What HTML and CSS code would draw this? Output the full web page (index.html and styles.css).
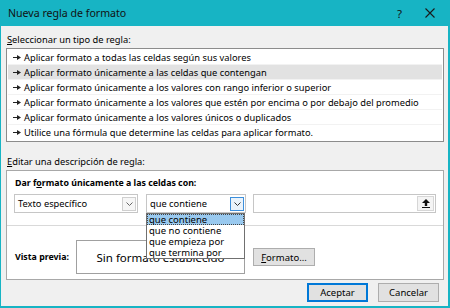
FILE: index.html
```html
<!DOCTYPE html>
<html lang="es">
<head>
<meta charset="utf-8"/>
<title>Nueva regla de formato</title>
<link rel="stylesheet" href="styles.css">
</head>
<body>
<div class="dialog">
  <div class="titlebar">
    <span class="title">Nueva regla de formato</span>
    <span class="help">?</span>
    <svg class="close" width="10" height="10" viewBox="0 0 10 10"><path d="M0.5 0.5 L9.5 9.5 M9.5 0.5 L0.5 9.5" stroke="#1a1a1a" stroke-width="1.1" fill="none"/></svg>
  </div>
  <div class="content">
    <div class="label"><u>S</u>eleccionar un tipo de regla:</div>
    <ul class="rule-types">
      <li><svg class="pointer" width="8" height="5" viewBox="0 0 8 5"><path d="M0 2 H4 V3 H0 Z M4 0 L8 2.5 L4 5 Z" fill="#222"/></svg>Aplicar formato a todas las celdas según sus valores</li>
      <li class="selected"><svg class="pointer" width="8" height="5" viewBox="0 0 8 5"><path d="M0 2 H4 V3 H0 Z M4 0 L8 2.5 L4 5 Z" fill="#222"/></svg>Aplicar formato únicamente a las celdas que contengan</li>
      <li><svg class="pointer" width="8" height="5" viewBox="0 0 8 5"><path d="M0 2 H4 V3 H0 Z M4 0 L8 2.5 L4 5 Z" fill="#222"/></svg>Aplicar formato únicamente a los valores con rango inferior o superior</li>
      <li><svg class="pointer" width="8" height="5" viewBox="0 0 8 5"><path d="M0 2 H4 V3 H0 Z M4 0 L8 2.5 L4 5 Z" fill="#222"/></svg>Aplicar formato únicamente a los valores que estén por encima o por debajo del promedio</li>
      <li><svg class="pointer" width="8" height="5" viewBox="0 0 8 5"><path d="M0 2 H4 V3 H0 Z M4 0 L8 2.5 L4 5 Z" fill="#222"/></svg>Aplicar formato únicamente a los valores únicos o duplicados</li>
      <li><svg class="pointer" width="8" height="5" viewBox="0 0 8 5"><path d="M0 2 H4 V3 H0 Z M4 0 L8 2.5 L4 5 Z" fill="#222"/></svg>Utilice una fórmula que determine las celdas para aplicar formato.</li>
    </ul>
    <div class="label label-edit"><u>E</u>ditar una descripción de regla:</div>
    <div class="group">
      <div class="group-top">
        <div class="bold">Dar f<u>o</u>rmato únicamente a las celdas con:</div>
        <div class="controls">
          <div class="combo combo-type">
            <span class="combo-text">Texto específico</span>
            <span class="combo-btn"><svg width="7" height="4" viewBox="0 0 7 4"><path d="M0.5 0.5 L3.5 3.5 L6.5 0.5" stroke="#666" fill="none"/></svg></span>
          </div>
          <div class="combo combo-op">
            <span class="combo-text">que contiene</span>
            <span class="combo-btn focused"><svg width="7" height="4" viewBox="0 0 7 4"><path d="M0.5 0.5 L3.5 3.5 L6.5 0.5" stroke="#333" fill="none"/></svg></span>
            <ul class="dropdown">
              <li class="active">que contiene</li>
              <li>que no contiene</li>
              <li>que empieza por</li>
              <li>que termina por</li>
            </ul>
          </div>
          <div class="textfield">
            <span class="ref-btn"><svg width="8" height="9" viewBox="0 0 8 9"><path d="M4 0 L8 4 H5.2 V7 H2.8 V4 H0 Z M0 8 H8 V9 H0 Z" fill="#111"/></svg></span>
          </div>
        </div>
      </div>
      <div class="group-bottom">
        <span class="bold preview-label">Vista previa:</span>
        <div class="preview">Sin formato establecido</div>
        <button class="btn btn-format"><u>F</u>ormato...</button>
      </div>
    </div>
    <div class="actions">
      <button class="btn btn-default">Aceptar</button>
      <button class="btn">Cancelar</button>
    </div>
  </div>
</div>
</body>
</html>
```

FILE: styles.css
```css
body {
  margin: 0;
  font-family: "Noto Sans", sans-serif;
  font-size: 9.3px;
  color: #000;
}

.dialog {
  width: 450px;
  height: 308px;
  display: flex;
  flex-direction: column;
  background: #f0f0f0;
}

.titlebar {
  height: 26px;
  flex: none;
  background: #17b4c4;
  display: flex;
  align-items: center;
  padding: 0 15px 0 8px;
  font-size: 10.6px;
  color: #111;
}
.title {
  flex: 1;
}
.help {
  font-size: 11.5px;
  margin-right: 23px;
}

.content {
  flex: 1;
  border: 1px solid #17b4c4;
  border-top: 0;
  border-right-width: 2px;
  border-bottom-width: 2px;
  padding: 0 4px 0 5px;
}

.label {
  line-height: 14px;
  margin: 7px 0 1px 1px;
}
.label-edit {
  margin-top: 13px;
}

.rule-types {
  list-style: none;
  margin: 0;
  padding: 1px;
  background: #fff;
  border: 1px solid #8c8c8c;
}
.rule-types li {
  height: 15px;
  box-sizing: border-box;
  display: flex;
  align-items: center;
  padding-left: 5px;
  border-bottom: 1px solid #f2f2f2;
  white-space: nowrap;
}
.rule-types li:last-child {
  border-bottom: 0;
}
.rule-types li.selected {
  background: #e2e2e2;
}
.pointer {
  flex: none;
  margin-right: 3px;
}

.group {
  background: #fff;
  border: 1px solid #a8a8a8;
}
.group-top {
  padding: 5px 7px 12px 7px;
  border-bottom: 1px solid #d9d9d9;
}
.bold {
  font-weight: bold;
  font-size: 8.8px;
  line-height: 14px;
  margin-left: 1px;
  white-space: nowrap;
}

.controls {
  display: flex;
  margin-top: 4px;
  height: 19px;
}
.combo {
  position: relative;
  box-sizing: border-box;
  height: 19px;
  border: 1px solid #c6c6c6;
  display: flex;
  align-items: center;
  justify-content: space-between;
  padding: 0 1px 0 3px;
  background: #fff;
}
.combo-type {
  width: 124px;
}
.combo-op {
  width: 100px;
  margin-left: 8px;
}
.combo-btn {
  width: 14px;
  height: 14px;
  box-sizing: border-box;
  border: 1px solid #cfcfcf;
  background: #f6f6f6;
  display: flex;
  align-items: center;
  justify-content: center;
}
.combo-btn.focused {
  border-color: #3c8fdc;
  background: #eaf3fb;
}

.dropdown {
  position: absolute;
  left: -1px;
  top: 18px;
  width: 99px;
  box-sizing: border-box;
  margin: 0;
  padding: 0;
  list-style: none;
  background: #fff;
  border: 1px solid #707070;
  z-index: 2;
  font-size: 9.5px;
}
.dropdown li {
  height: 11px;
  line-height: 11px;
  padding-left: 2px;
  box-sizing: border-box;
}
.dropdown li.active {
  background: #99c9ef;
  border: 1px dotted #444;
  padding-left: 1px;
  line-height: 9px;
}

.textfield {
  width: 183px;
  height: 19px;
  box-sizing: border-box;
  margin-left: 7px;
  border: 1px solid #c6c6c6;
  display: flex;
  justify-content: flex-end;
  align-items: center;
  padding-right: 1px;
}
.ref-btn {
  width: 17px;
  height: 15px;
  box-sizing: border-box;
  border: 1px solid #d6d6d6;
  background: #f4f4f4;
  display: flex;
  align-items: center;
  justify-content: center;
}

.group-bottom {
  display: flex;
  align-items: center;
  padding: 14px 0 5px 8px;
}
.preview-label {
  width: 61px;
  margin-left: 0;
}
.preview {
  width: 169px;
  height: 34px;
  box-sizing: border-box;
  border: 1px solid #a0a0a0;
  display: flex;
  align-items: center;
  justify-content: center;
  font-size: 11.5px;
}

.btn {
  font-family: "Noto Sans", sans-serif;
  font-size: 9.5px;
  width: 61px;
  height: 19px;
  padding: 0;
  border: 1px solid #adadad;
  background: #e1e1e1;
  color: #000;
}
.btn-format {
  margin-left: 8px;
  width: 62px;
  height: 18px;
}
.btn-default {
  border-color: #0078d7;
  box-shadow: inset 0 0 0 1px #0078d7;
}

.actions {
  display: flex;
  justify-content: flex-end;
  gap: 10px;
  margin-top: 3px;
  padding-right: 5px;
}
```
